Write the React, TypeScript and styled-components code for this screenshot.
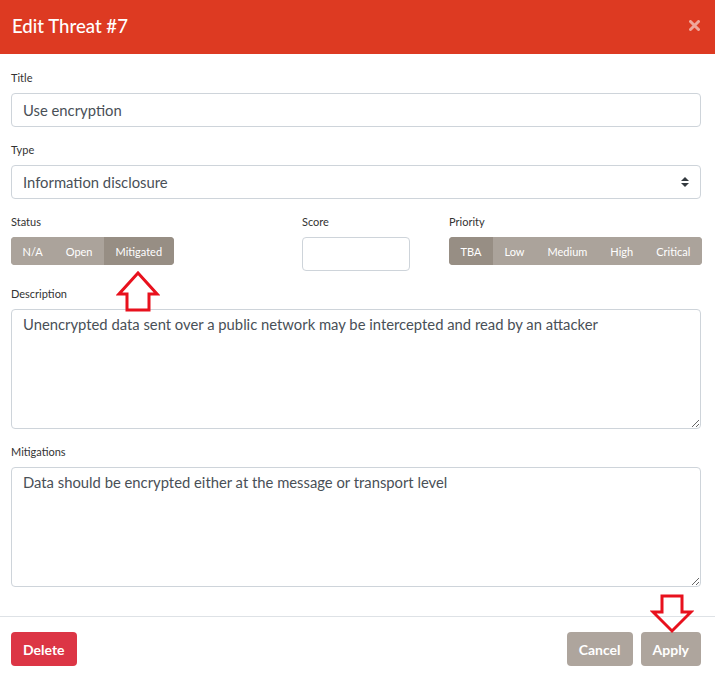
import React from "react";
import styled, { createGlobalStyle } from "styled-components";

const Global = createGlobalStyle`
  * { box-sizing: border-box; }
  html, body { margin: 0; padding: 0; background: #fff; }
  body { font-family: "Lato", "Noto Sans", sans-serif; color: #212529; }
`;

const Modal = styled.div`
  width: 715px;
  min-height: 673px;
  background: #fff;
  display: flex;
  flex-direction: column;
`;

const Header = styled.div`
  height: 54px;
  background: #dd3a22;
  display: flex;
  align-items: center;
  justify-content: space-between;
  padding: 0 15px 3px 12px;
`;

const HeaderTitle = styled.h5`
  margin: 0;
  color: #fff;
  font-size: 18.6px;
  font-weight: 500;
`;

const CloseButton = styled.button`
  border: 0;
  background: transparent;
  padding: 0;
  display: flex;
  opacity: 0.55;
  cursor: pointer;
`;

const Body = styled.div`
  position: relative;
  padding: 15px 14px 29px 11px;
  display: flex;
  flex-direction: column;
  gap: 14px;
`;

const Group = styled.div`
  display: flex;
  flex-direction: column;
`;

const Label = styled.label`
  font-size: 11px;
  line-height: 18px;
  margin-bottom: 6px;
  color: #333;
`;

const Input = styled.input<{ $width?: number }>`
  height: 34px;
  width: ${(p) => (p.$width ? `${p.$width}px` : "100%")};
  border: 1px solid #ced4da;
  border-radius: 4px;
  padding: 0 11px 1px;
  font-family: inherit;
  font-size: 14.8px;
  color: #495057;
  outline: none;
`;

const SelectBox = styled.div`
  height: 34px;
  border: 1px solid #ced4da;
  border-radius: 4px;
  padding: 0 11px 1px;
  display: flex;
  align-items: center;
  justify-content: space-between;
  font-size: 14.8px;
  color: #495057;
`;

const TextArea = styled.textarea`
  height: 120px;
  width: 100%;
  border: 1px solid #ced4da;
  border-radius: 4px;
  padding: 4px 11px;
  font-family: inherit;
  font-size: 14.8px;
  line-height: 21px;
  color: #495057;
  outline: none;
  resize: vertical;
`;

const Row = styled.div`
  display: grid;
  grid-template-columns: 291px 147px 252px;
`;

const BtnGroup = styled.div`
  display: inline-flex;
  align-self: flex-start;
  border-radius: 4px;
  overflow: hidden;
  background: #aba39b;
`;

const SegButton = styled.button<{ $active?: boolean }>`
  height: 28px;
  border: 0;
  padding: 0 11.5px;
  font-family: inherit;
  font-size: 11px;
  color: #fff;
  background: ${(p) => (p.$active ? "#978e84" : "#aba39b")};
  cursor: pointer;
`;

const Footer = styled.div`
  position: relative;
  border-top: 1px solid #dee2e6;
  padding: 15px 14px 8px 11px;
  display: flex;
  justify-content: space-between;
`;

const Actions = styled.div`
  display: flex;
  gap: 8px;
`;

const Button = styled.button<{ $variant: "danger" | "secondary" }>`
  height: 34px;
  padding: 0 12px;
  border: 0;
  border-radius: 4px;
  font-family: inherit;
  font-size: 14px;
  font-weight: 700;
  color: #fff;
  background: ${(p) => (p.$variant === "danger" ? "#dc3545" : "#aea59d")};
  cursor: pointer;
`;

const Arrow = styled.svg`
  position: absolute;
  pointer-events: none;
`;

const UpArrow = () => (
  <Arrow width="44" height="42" viewBox="0 0 44 42" style={{ left: 116, top: 217 }}>
    <polygon
      points="22,2 41,23 33,23 33,39 11,39 11,23 3,23"
      fill="none"
      stroke="#e8111d"
      strokeWidth="3"
      strokeLinejoin="miter"
    />
  </Arrow>
);

const DownArrow = () => (
  <Arrow width="44" height="40" viewBox="0 0 44 40" style={{ left: 650, top: -23 }}>
    <polygon
      points="12,2 32,2 32,18 41,18 22,37 3,18 12,18"
      fill="none"
      stroke="#e8111d"
      strokeWidth="3"
      strokeLinejoin="miter"
    />
  </Arrow>
);

const Chevron = () => (
  <svg width="8" height="10" viewBox="0 0 8 10">
    <polygon points="4,0 8,4 0,4" fill="#343a40" />
    <polygon points="0,6 8,6 4,10" fill="#343a40" />
  </svg>
);

const CloseIcon = () => (
  <svg width="11" height="11" viewBox="0 0 11 11">
    <path d="M1.5 1.5 L9.5 9.5 M9.5 1.5 L1.5 9.5" stroke="#fff" strokeWidth="3" strokeLinecap="round" />
  </svg>
);

const statuses = ["N/A", "Open", "Mitigated"];
const priorities = ["TBA", "Low", "Medium", "High", "Critical"];

export default function App() {
  return (
    <>
      <Global />
      <Modal>
        <Header>
          <HeaderTitle>Edit Threat #7</HeaderTitle>
          <CloseButton aria-label="Close">
            <CloseIcon />
          </CloseButton>
        </Header>
        <Body>
          <Group>
            <Label>Title</Label>
            <Input defaultValue="Use encryption" />
          </Group>
          <Group>
            <Label>Type</Label>
            <SelectBox>
              <span>Information disclosure</span>
              <Chevron />
            </SelectBox>
          </Group>
          <Row>
            <Group>
              <Label>Status</Label>
              <BtnGroup>
                {statuses.map((s) => (
                  <SegButton key={s} $active={s === "Mitigated"}>
                    {s}
                  </SegButton>
                ))}
              </BtnGroup>
            </Group>
            <Group>
              <Label>Score</Label>
              <Input $width={108} defaultValue="" />
            </Group>
            <Group>
              <Label>Priority</Label>
              <BtnGroup>
                {priorities.map((s) => (
                  <SegButton key={s} $active={s === "TBA"}>
                    {s}
                  </SegButton>
                ))}
              </BtnGroup>
            </Group>
          </Row>
          <Group>
            <Label>Description</Label>
            <TextArea defaultValue="Unencrypted data sent over a public network may be intercepted and read by an attacker" />
          </Group>
          <Group>
            <Label>Mitigations</Label>
            <TextArea defaultValue="Data should be encrypted either at the message or transport level" />
          </Group>
          <UpArrow />
        </Body>
        <Footer>
          <Button $variant="danger">Delete</Button>
          <Actions>
            <Button $variant="secondary">Cancel</Button>
            <Button $variant="secondary">Apply</Button>
          </Actions>
          <DownArrow />
        </Footer>
      </Modal>
    </>
  );
}
